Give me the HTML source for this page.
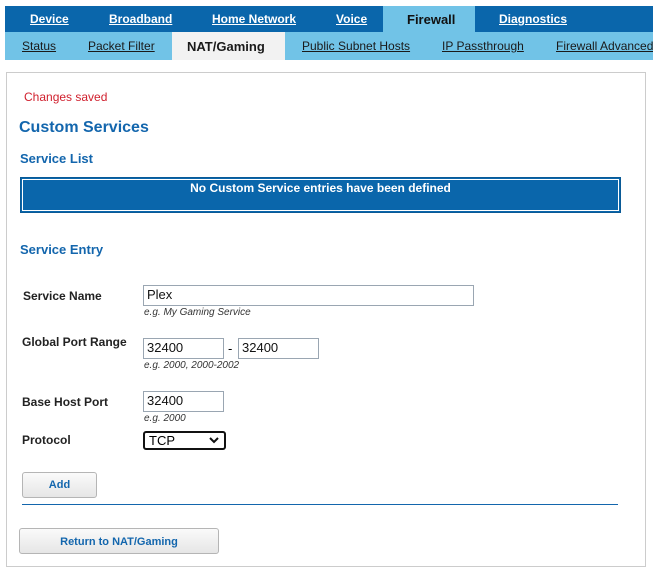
<!DOCTYPE html>
<html><head><style>
body{margin:0;background:#fff;font-family:"Liberation Sans",Arial,sans-serif;width:653px;height:571px;overflow:hidden;position:relative}
.a{position:absolute;white-space:nowrap}
.top{left:5px;top:6px;width:648px;height:26px;background:#0a66ab}
.top span{position:absolute;top:6px;color:#fff;font-weight:bold;font-size:12px;text-decoration:underline}
.sub{left:5px;top:32px;width:648px;height:28px;background:#71c3e7;overflow:hidden}
.sub span{position:absolute;top:7px;color:#1a1a1a;font-size:12px;text-decoration:underline;white-space:nowrap}
.box{left:6px;top:72px;width:638px;height:493px;border:1px solid #ccc}
.lbl{font-size:12px;font-weight:bold;color:#222}
.in{border:1px solid #9aa6b2;font-size:13px;color:#111;box-sizing:border-box;padding:2px 3px;line-height:14px}
.hint{font-size:10px;font-style:italic;color:#333}
.h{color:#1366ad;font-weight:bold}
.btn{border:1px solid #b5b5b5;border-radius:3px;background:linear-gradient(#fafafa,#e6e6e6);color:#1366ad;font-weight:bold;font-size:11px;text-align:center;box-sizing:border-box}
</style></head><body>
<div class="a top">
<span style="left:25px">Device</span><span style="left:104px">Broadband</span><span style="left:207px">Home Network</span><span style="left:331px">Voice</span>
<div class="a" style="left:378px;top:0;width:92px;height:26px;background:#71c3e7"></div>
<span style="left:402px;color:#111;text-decoration:none;font-size:13px;top:6px">Firewall</span>
<span style="left:494px">Diagnostics</span>
</div>
<div class="a sub">
<span style="left:17px">Status</span><span style="left:83px">Packet Filter</span>
<div class="a" style="left:167px;top:0;width:113px;height:28px;background:#f2f2f2"></div>
<span style="left:182px;top:7px;font-weight:bold;font-size:13px;text-decoration:none">NAT/Gaming</span>
<span style="left:297px">Public Subnet Hosts</span><span style="left:437px">IP Passthrough</span><span style="left:551px">Firewall Advanced</span>
</div>
<div class="a box"></div>
<div class="a" style="left:24px;top:90px;font-size:12px;color:#d0202e">Changes saved</div>
<div class="a h" style="left:19px;top:119px;font-size:16px">Custom Services</div>
<div class="a h" style="left:20px;top:151px;font-size:13px">Service List</div>
<div class="a" style="left:20px;top:177px;width:601px;height:36px;background:#0a66ab;box-sizing:border-box;border:1px solid #0a5a96;outline:1px solid #fff;outline-offset:-3px"></div>
<div class="a" style="left:20px;top:181px;width:601px;text-align:center;color:#fff;font-weight:bold;font-size:12px">No Custom Service entries have been defined</div>
<div class="a h" style="left:20px;top:242px;font-size:13px">Service Entry</div>
<div class="a lbl" style="left:23px;top:289px">Service Name</div>
<div class="a in" style="left:143px;top:285px;width:331px;height:21px">Plex</div>
<div class="a hint" style="left:144px;top:307px">e.g. My Gaming Service</div>
<div class="a lbl" style="left:22px;top:335px">Global Port Range</div>
<div class="a in" style="left:143px;top:338px;width:81px;height:21px">32400</div>
<div class="a" style="left:228px;top:341px;font-size:13px">-</div>
<div class="a in" style="left:238px;top:338px;width:81px;height:21px">32400</div>
<div class="a hint" style="left:144px;top:360px">e.g. 2000, 2000-2002</div>
<div class="a lbl" style="left:22px;top:395px">Base Host Port</div>
<div class="a in" style="left:143px;top:391px;width:81px;height:21px">32400</div>
<div class="a hint" style="left:144px;top:413px">e.g. 2000</div>
<div class="a lbl" style="left:22px;top:433px">Protocol</div>
<div class="a" style="left:143px;top:431px;width:83px;height:19px;border:2px solid #111;border-radius:3px;box-sizing:border-box;font-size:13px;padding-left:4px;line-height:15px">TCP
<svg class="a" style="right:5px;top:4px" width="10" height="7" viewBox="0 0 10 7"><path d="M1 1l4 4 4-4" stroke="#111" stroke-width="2" fill="none"/></svg></div>
<div class="a btn" style="left:22px;top:472px;width:75px;height:26px;line-height:24px">Add</div>
<div class="a" style="left:22px;top:504px;width:596px;height:1px;background:#1366ad"></div>
<div class="a btn" style="left:19px;top:528px;width:200px;height:26px;line-height:26px">Return to NAT/Gaming</div>
</body></html>
